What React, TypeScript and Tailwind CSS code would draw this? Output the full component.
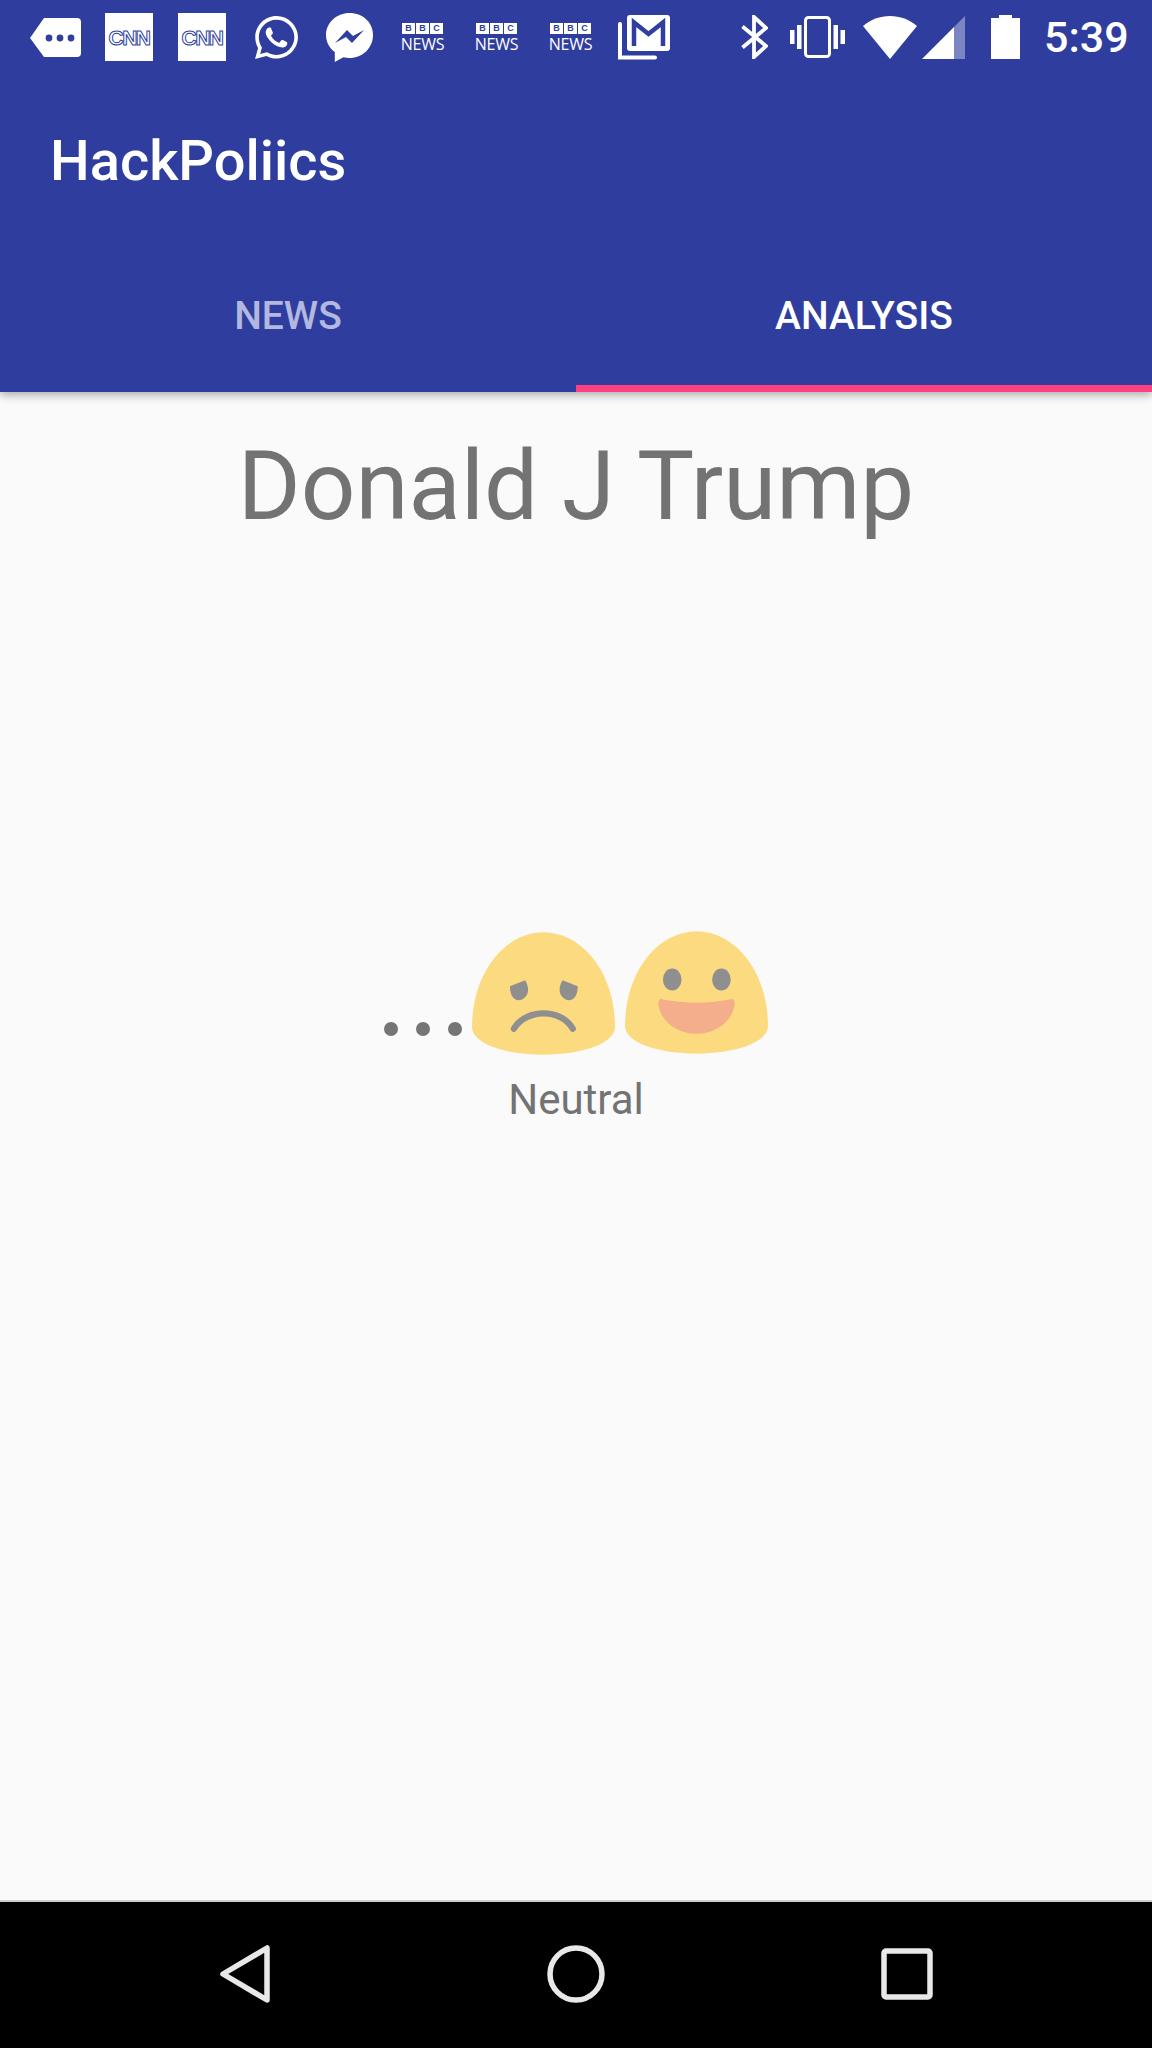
import React from 'react';
import { FaWhatsapp } from 'react-icons/fa';

const CnnIcon = () => (
  <div className="flex h-[48px] w-[48px] items-center justify-center overflow-hidden bg-white">
    <span className="text-[21px] font-bold leading-none tracking-[-1.5px] text-white [-webkit-text-stroke:1px_#303f9f] [font-family:'Liberation_Sans',sans-serif]">CNN</span>
  </div>
);

const BbcIcon = () => (
  <div className="flex w-[49px] flex-col items-center">
    <div className="flex gap-[1px]">
      {['B', 'B', 'C'].map((letter, i) => (
        <span key={i} className="flex h-[11px] w-[13px] items-center justify-center bg-white text-[9px] font-bold leading-none text-[#303f9f] [font-family:'Liberation_Sans',sans-serif]">{letter}</span>
      ))}
    </div>
    <span className="mt-[4px] text-[16px] leading-[13px] tracking-[-0.3px] text-white [font-family:'Open_Sans',sans-serif]">NEWS</span>
  </div>
);

const OverflowIcon = () => (
  <svg width="51" height="39" viewBox="0 0 51 39">
    <path d="M14 0H47a4 4 0 0 1 4 4V35a4 4 0 0 1-4 4H14L0 20Z" fill="#fff" />
    <circle cx="19" cy="20" r="3.4" fill="#303f9f" />
    <circle cx="30" cy="20" r="3.4" fill="#303f9f" />
    <circle cx="41" cy="20" r="3.4" fill="#303f9f" />
  </svg>
);

const MessengerIcon = () => (
  <svg width="47" height="49" viewBox="0 0 47 49">
    <path d="M23.5 0C10.5 0 0 9.8 0 22c0 7 3.4 13 8.8 17v10l8.6-4.8c2 .5 4 .8 6.1.8C36.500 45 47 35 47 22S36.500 0 23.500 0Z" fill="#fff" />
    <path d="M9 30 21 17l6 6 11-6-12 13-6-6Z" fill="#303f9f" />
  </svg>
);

const GmailIcon = () => (
  <svg width="52" height="45" viewBox="0 0 52 45">
    <path d="M2 9V42.500H37" fill="none" stroke="#fff" strokeWidth="4" strokeLinecap="round" />
    <rect x="9" y="0" width="43" height="36" rx="3" fill="#fff" />
    <path d="M16 31V7.500L30.500 19 45 7.500V31" fill="none" stroke="#303f9f" strokeWidth="4.500" />
  </svg>
);

const BluetoothIcon = () => (
  <svg width="27" height="44" viewBox="0 0 27 44">
    <path d="M1.500 11.500 25 31 13 42V2L25 13 1.500 32.500" fill="none" stroke="#fff" strokeWidth="3.800" />
  </svg>
);

const VibrateIcon = () => (
  <svg width="55" height="42" viewBox="0 0 55 42">
    <rect x="15.500" y="1.500" width="24" height="39" rx="3" fill="none" stroke="#fff" strokeWidth="3" />
    <rect x="0" y="14" width="4.500" height="14" fill="#fff" />
    <rect x="7" y="9" width="4.500" height="24" fill="#fff" />
    <rect x="43.500" y="9" width="4.500" height="24" fill="#fff" />
    <rect x="50.500" y="14" width="4.500" height="14" fill="#fff" />
  </svg>
);

const WifiIcon = () => (
  <svg width="54" height="43" viewBox="0 0 54 43">
    <path d="M27 43 0 10C7.500 3.500 17 0 27 0s19.500 3.500 27 10Z" fill="#fff" />
  </svg>
);

const SignalIcon = () => (
  <svg width="44" height="43" viewBox="0 0 44 43">
    <path d="M0 43 32 11V43Z" fill="#fff" />
    <path d="M32 11 43 0V43H32Z" fill="#7c85c4" />
  </svg>
);

const BatteryIcon = () => (
  <svg width="29" height="44" viewBox="0 0 29 44">
    <path d="M8 0H21V3H29V44H0V3H8Z" fill="#fff" />
  </svg>
);

const SadEmoji = () => (
  <svg width="143" height="123" viewBox="0 0 430 368">
    <path d="M215 0C330 0 430 120 430 285C430 335 330 368 215 368C100 368 0 335 0 285C0 120 100 0 215 0Z" fill="#fcdb80" />
    <path d="M114 162 160 144C168 158 170 170 168 180C164 195 152 204 140 204C126 204 114 190 114 162Z" fill="#8f8f8f" />
    <path d="M318 162 272 144C264 158 262 170 264 180C268 195 280 204 292 204C306 204 318 190 318 162Z" fill="#8f8f8f" />
    <path d="M126 290C146 256 184 244 215 244C246 244 284 256 303 290" fill="none" stroke="#8f8f8f" strokeWidth="19" strokeLinecap="round" />
  </svg>
);

const HappyEmoji = () => (
  <svg width="143" height="123" viewBox="0 0 430 368">
    <path d="M215 0C330 0 430 120 430 285C430 335 330 368 215 368C100 368 0 335 0 285C0 120 100 0 215 0Z" fill="#fcdb80" />
    <ellipse cx="142" cy="145" rx="28" ry="33" fill="#8f8f8f" />
    <ellipse cx="290" cy="145" rx="28" ry="33" fill="#8f8f8f" />
    <path d="M112 204C180 218 250 218 318 204C326 202 330 208 330 216C326 268 276 308 215 308C154 308 104 268 100 216C100 208 104 202 112 204Z" fill="#f4ae8c" />
  </svg>
);

export default function App() {
  return (
    <div className="flex h-[2048px] w-[1152px] flex-col overflow-hidden bg-[#fafafa] [font-family:Roboto,sans-serif]">
      <header className="relative z-10 h-[392px] bg-[#2f3e9e] shadow-[0_3px_9px_rgba(0,0,0,0.32)]">
        <div className="flex h-[73px] items-center pl-[30px] pt-[1px]">
          <OverflowIcon />
          <div className="ml-[24px]"><CnnIcon /></div>
          <div className="ml-[25px]"><CnnIcon /></div>
          <FaWhatsapp className="ml-[26px] text-[49px] text-white" />
          <div className="ml-[25px]"><MessengerIcon /></div>
          <div className="ml-[25px]"><BbcIcon /></div>
          <div className="ml-[25px]"><BbcIcon /></div>
          <div className="ml-[25px]"><BbcIcon /></div>
          <div className="ml-[23px]"><GmailIcon /></div>
          <div className="ml-[71px]"><BluetoothIcon /></div>
          <div className="ml-[22px]"><VibrateIcon /></div>
          <div className="ml-[18px]"><WifiIcon /></div>
          <div className="ml-[5px]"><SignalIcon /></div>
          <div className="ml-[25px]"><BatteryIcon /></div>
          <span className="ml-[24px] text-[43px] font-medium leading-none text-white">5:39</span>
        </div>
        <div className="flex h-[177px] items-center pb-[2px] pl-[50px]">
          <h1 className="text-[56px] font-medium leading-none text-white">HackPoliics</h1>
        </div>
        <div className="flex h-[142px]">
          <div className="flex flex-1 items-center justify-center pb-[10px] text-[39px] font-medium leading-none text-[#b2b8df]">NEWS</div>
          <div className="flex flex-1 items-center justify-center border-b-[7px] border-[#ff4081] pb-[3px] text-[39px] font-medium leading-none text-white">ANALYSIS</div>
        </div>
      </header>

      <main className="flex flex-1 flex-col items-center">
        <h2 className="mt-[33px] text-[96px] leading-[122px] text-[#737373]">Donald J Trump</h2>
        <div className="mt-[384px] flex items-end">
          <div className="mb-[19px] mr-[10px] flex gap-[18px]">
            <span className="h-[14px] w-[14px] rounded-full bg-[#757575]" />
            <span className="h-[14px] w-[14px] rounded-full bg-[#757575]" />
            <span className="h-[14px] w-[14px] rounded-full bg-[#757575]" />
          </div>
          <SadEmoji />
          <div className="mb-[1px] ml-[10px]"><HappyEmoji /></div>
        </div>
        <p className="mt-[20px] text-[42px] leading-[50px] text-[#737373]">Neutral</p>
      </main>

      <nav className="flex h-[148px] items-center justify-between border-t-2 border-[#cccccc] bg-black pb-[2px] pl-[218px] pr-[218px]">
        <svg width="54" height="60" viewBox="0 0 54 60">
          <path d="M49 4V56L5 30Z" fill="none" stroke="#e8e8e8" strokeWidth="5.500" strokeLinejoin="round" />
        </svg>
        <svg width="60" height="60" viewBox="0 0 60 60">
          <circle cx="30" cy="30" r="26" fill="none" stroke="#e8e8e8" strokeWidth="5.500" />
        </svg>
        <svg width="54" height="54" viewBox="0 0 54 54">
          <rect x="4" y="4" width="46" height="46" rx="2" fill="none" stroke="#e8e8e8" strokeWidth="5.500" />
        </svg>
      </nav>
    </div>
  );
}
